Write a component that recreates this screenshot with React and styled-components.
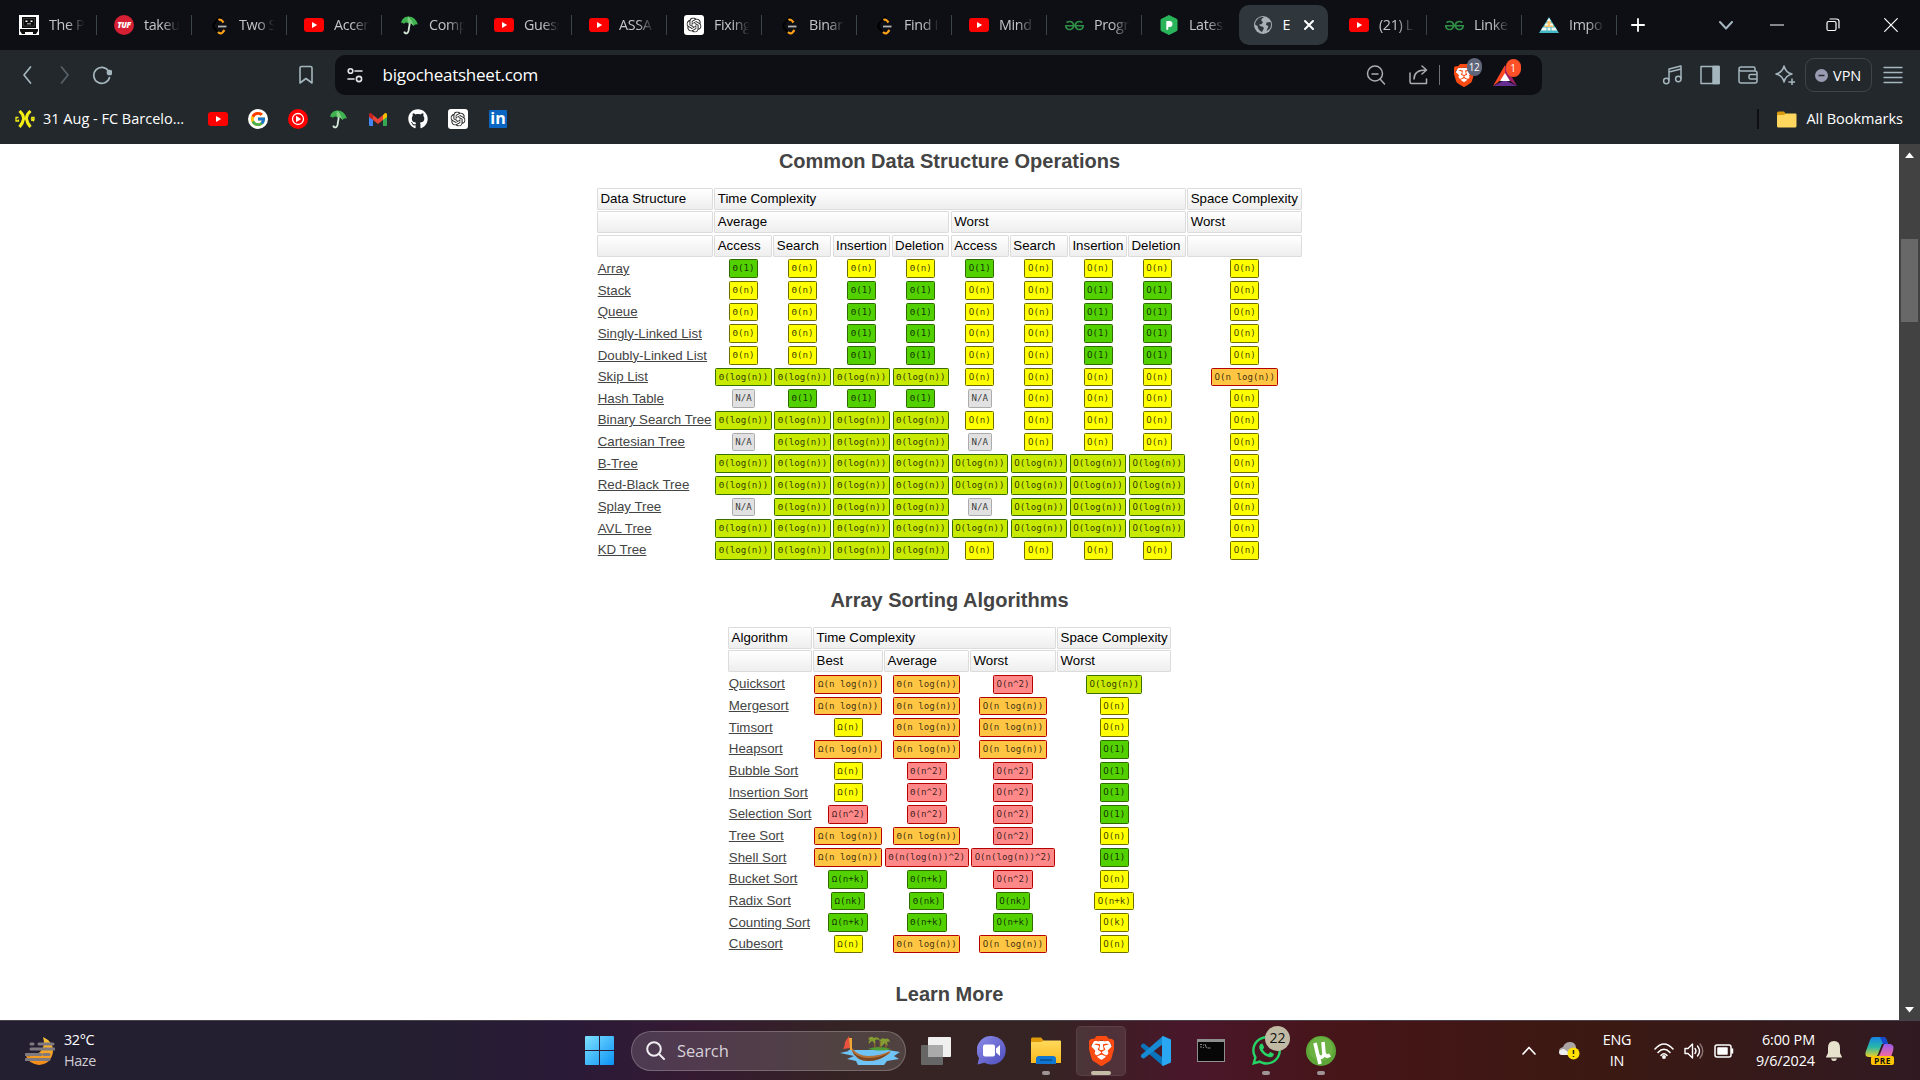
import React from "react";
import styled, { createGlobalStyle, css } from "styled-components";
import { SiBrave, SiOpenai, SiGeeksforgeeks } from "react-icons/si";
import { FaGithub, FaWhatsapp } from "react-icons/fa";
import { FcGoogle } from "react-icons/fc";

const Global = createGlobalStyle`
  * { box-sizing: border-box; }
  html, body { margin: 0; padding: 0; overflow: hidden; background: #fff; }
  svg { display: block; flex: none; }
`;

const ui = `"Open Sans", "Noto Sans", sans-serif`;

const Screen = styled.div`
  width: 1920px;
  height: 1080px;
  display: flex;
  flex-direction: column;
  overflow: hidden;
  font-family: ${ui};
`;

/* ---------- tab strip ---------- */
const TabStrip = styled.div`
  height: 50px;
  flex: none;
  display: flex;
  align-items: center;
  background: #0d0f14;
  padding-left: 4px;
`;
const Tab = styled.div`
  width: 95px;
  height: 40px;
  flex: none;
  display: flex;
  align-items: center;
  padding-left: 15px;
  border-radius: 10px;
  ${(p) =>
    p.$active &&
    css`
      width: 89px;
      margin-right: 6px;
      padding-left: 14px;
      background: #2f373c;
    `}
`;
const Favicon = styled.span`
  width: 20px;
  height: 20px;
  flex: none;
  display: flex;
  align-items: center;
  justify-content: center;
`;
const TabLabel = styled.span`
  width: ${(p) => (p.$active ? 7 : 37)}px;
  margin-left: ${(p) => (p.$active ? 9.5 : 10)}px;
  overflow: hidden;
  white-space: nowrap;
  font-size: 14.3px;
  line-height: 20px;
  letter-spacing: -0.35px;
  color: ${(p) => (p.$active ? "#fff" : "#c3c5c8")};
  mask-image: ${(p) => (p.$active ? "none" : "linear-gradient(90deg, #000 50%, transparent 96%)")};
`;
const TabDivider = styled.span`
  width: 1px;
  height: 20px;
  margin-left: 10px;
  background: #3b4549;
`;
const TabClose = styled.span`
  margin-left: 9px;
  display: flex;
`;
const WindowControls = styled.div`
  display: flex;
  align-items: center;
  margin-left: 12px;
`;
const Control = styled.span`
  display: flex;
  margin-left: ${(p) => p.$ml || 0}px;
`;

/* ---------- toolbar ---------- */
const Toolbar = styled.div`
  height: 50px;
  flex: none;
  display: flex;
  align-items: center;
  background: #22282c;
`;
const NavButtons = styled.div`
  width: 335px;
  display: flex;
  align-items: center;
  padding-left: 18px;
`;
const Slot = styled.span`
  display: flex;
  margin-left: ${(p) => p.$ml || 0}px;
`;
const AddressBar = styled.div`
  width: 1207px;
  height: 40px;
  border-radius: 10px;
  background: #0d0f14;
  display: flex;
  align-items: center;
  padding-left: 11px;
`;
const Url = styled.span`
  margin-left: 18.5px;
  width: 975px;
  font-size: 17px;
  letter-spacing: -0.25px;
  line-height: 24px;
  color: #fff;
`;
const AddressDivider = styled.span`
  width: 1px;
  height: 20px;
  margin-left: 11px;
  background: #6b7176;
`;
const ShieldWrap = styled.span`
  position: relative;
  display: flex;
  margin-left: ${(p) => p.$ml}px;
`;
const CountBadge = styled.span`
  position: absolute;
  left: 13px;
  top: -6px;
  width: 15px;
  height: 18px;
  border-radius: 8px;
  background: ${(p) => p.$bg};
  color: #fff;
  font-size: 10px;
  line-height: 18px;
  text-align: center;
  letter-spacing: -0.4px;
`;
const RightTools = styled.div`
  display: flex;
  align-items: center;
  padding-left: 120px;
`;
const Vpn = styled.span`
  width: 67px;
  height: 34px;
  margin-left: 10px;
  border: 1px solid #3c4649;
  border-radius: 9px;
  display: flex;
  align-items: center;
  padding-left: 9px;
  gap: 5px;
  font-size: 14.5px;
  color: #fff;
`;

/* ---------- bookmarks ---------- */
const Bookmarks = styled.div`
  height: 44px;
  flex: none;
  display: flex;
  align-items: center;
  background: #22282c;
  padding: 0 17px 6px 15px;
`;
const BookmarkText = styled.span`
  font-size: 14.5px;
  line-height: 20px;
  color: #fff;
  white-space: nowrap;
`;
const BookmarkName = styled.span`
  width: 173px;
  padding-left: 8px;
  display: flex;
`;
const BookmarkIcons = styled.div`
  display: flex;
  gap: 20px;
  flex: 1;
`;
const BookmarkDivider = styled.span`
  width: 2px;
  height: 20px;
  background: #0d0f14;
  margin-right: 18px;
`;

/* ---------- page ---------- */
const Viewport = styled.div`
  height: 876px;
  flex: none;
  display: flex;
  background: #fff;
`;
const Page = styled.main`
  width: 1899px;
  height: 876px;
  overflow: hidden;
  display: flex;
  flex-direction: column;
  align-items: center;
  font-family: "Liberation Sans", Arial, sans-serif;
`;
const Heading = styled.h2`
  margin: 0;
  padding-top: ${(p) => (p.$first ? 0 : 21.8)}px;
  padding-bottom: 10px;
  font-size: 20px;
  line-height: 34px;
  font-weight: 700;
  color: #444;
`;
const Table = styled.div`
  display: grid;
  column-gap: 1.4px;
  grid-template-columns: ${(p) => p.$cols};
  grid-auto-rows: 21.667px;
  grid-template-rows: repeat(${(p) => p.$headers}, 23.3px);
  font-size: 13.3px;
`;
const HeadCell = styled.div`
  height: 22px;
  grid-column: span ${(p) => p.$span || 1};
  border: 1px solid #dcdcdc;
  border-radius: 1px;
  background: linear-gradient(#fff, #eee);
  padding-left: 2.4px;
  line-height: 20.4px;
  color: #000;
  white-space: nowrap;
`;
const NameCell = styled.a`
  padding-left: 0.6px;
  line-height: 21.6px;
  color: #444;
  text-decoration: underline;
  white-space: nowrap;
`;
const ChipCell = styled.div`
  display: flex;
  align-items: center;
  justify-content: center;
  padding-left: 0.4px;
`;
const tones = {
  green: ["#53d000", "#2f6a00"],
  lime: ["#c8ea00", "#3a6f00"],
  yellow: ["#ffff00", "#6e6e00"],
  orange: ["#ffc543", "#b60000"],
  red: ["#ff8989", "#b60000"],
  gray: ["#e1e1e1", "#ababab"],
};
const Chip = styled.code`
  height: 18.6px;
  border: 1px solid ${(p) => tones[p.$tone][1]};
  border-radius: 1.5px;
  background: ${(p) => tones[p.$tone][0]};
  padding: 0 2.5px;
  font-family: "DejaVu Sans Mono", monospace;
  font-size: 9.15px;
  line-height: 16px;
  white-space: pre;
  color: rgba(0, 0, 0, 0.78);
`;
const Scrollbar = styled.div`
  width: 21px;
  height: 876px;
  background: #424242;
  display: flex;
  flex-direction: column;
  align-items: center;
  padding: 8px 0 7px;
`;
const Thumb = styled.div`
  width: 17px;
  height: 83px;
  margin-top: 81px;
  margin-bottom: auto;
  background: #686868;
`;

/* ---------- taskbar ---------- */
const Taskbar = styled.div`
  height: 60px;
  flex: none;
  display: flex;
  align-items: center;
  border-top: 1px solid #48414b;
  color: #fff;
  background: linear-gradient(90deg, #241f30 0, #241f30 400px, #2a1a38 570px, #351a32 690px, #352423 850px, #352423 1040px, #49172a 1190px, #461517 1350px, #3b1912 1600px, #301a22 1920px);
`;
const Weather = styled.div`
  width: 585px;
  display: flex;
  align-items: center;
  padding-left: 25px;
  gap: 9px;
`;
const Lines = styled.div`
  display: flex;
  flex-direction: column;
  align-items: ${(p) => p.$align || "flex-start"};
  width: ${(p) => (p.$w ? p.$w + "px" : "auto")};
  margin-left: ${(p) => p.$ml || 0}px;
  font-size: 14.4px;
  line-height: 20.5px;
  letter-spacing: ${(p) => p.$ls || 0}px;
  white-space: nowrap;
  color: #fff;
`;
const Dim = styled.span`
  color: #cfccd3;
`;
const SearchPill = styled.div`
  width: 275px;
  height: 40px;
  margin-left: 17px;
  border: 1px solid rgba(255, 255, 255, 0.22);
  border-radius: 20px;
  background: rgba(255, 255, 255, 0.14);
  display: flex;
  align-items: center;
  padding-left: 14px;
`;
const SearchText = styled.span`
  margin-left: 12px;
  width: 163px;
  font-size: 16.5px;
  letter-spacing: -0.1px;
  color: #d6d1d8;
`;
const AppTile = styled.div`
  width: 50px;
  height: 50px;
  margin-left: 5px;
  border-radius: 5px;
  display: flex;
  align-items: center;
  justify-content: center;
  position: relative;
  ${(p) =>
    p.$active &&
    css`
      background: rgba(255, 255, 255, 0.09);
      border: 1px solid rgba(255, 255, 255, 0.07);
    `}
`;
const Running = styled.span`
  position: absolute;
  bottom: ${(p) => (p.$wide ? 0 : 1)}px;
  left: 50%;
  width: ${(p) => (p.$wide ? 20 : 8)}px;
  height: 4px;
  margin-left: ${(p) => (p.$wide ? -10 : -4)}px;
  border-radius: 2px;
  background: ${(p) => (p.$wide ? "#c5bda5" : "#a09596")};
`;
const AppBadge = styled.span`
  position: absolute;
  right: 1px;
  top: 0;
  width: 25px;
  height: 25px;
  line-height: 24px;
  border-radius: 50%;
  background: #c0b9a4;
  color: #111;
  font-size: 14px;
  text-align: center;
`;
const Tray = styled.div`
  display: flex;
  align-items: center;
  margin-left: 176px;
`;

/* ---------- icons ---------- */
const YouTube = () => (
  <svg width="20" height="14" viewBox="0 0 20 14"><rect width="20" height="14" rx="3" fill="#f00" /><path d="M8 4l5.2 3L8 10z" fill="#fff" /></svg>
);
const LeetCode = () => (
  <svg width="20" height="20" viewBox="0 0 20 20" fill="none">
    <path d="M12 1L5 8.500Q3.500 11 5 13l4 4.500" stroke="#000" strokeWidth="2" />
    <path d="M9.500 5q2-1.500 5 2.500M9 17q2.500 2.500 4.500.5l2-2.500" stroke="#ffa116" strokeWidth="2.200" />
    <path d="M9 11.500h8.500" stroke="#b3b3b3" strokeWidth="1.800" />
  </svg>
);
const Umbrella = () => (
  <svg width="20" height="20" viewBox="0 0 20 20">
    <path d="M11 7l-1.500 9q-1.400 4-4 1.500l.3-1" fill="none" stroke="#d5eadb" strokeWidth="1.800" />
    <path d="M2 8Q3 2 9 1.500Q16 1 19 9.500Q16 8.500 14.500 11Q12 7 9.500 8.500Q6.500 6.500 5 9Q3.500 7 2 8z" fill="#3fb34f" />
    <path d="M9.500 8.500Q8 4 9 1.500Q13 5 14.500 11Q12 7 9.500 8.500z" fill="#81cf82" />
  </svg>
);
const Train = () => (
  <svg width="20" height="20" viewBox="0 0 20 20"><rect width="20" height="20" fill="#fff" /><path d="M3 2h14v11H3zM1 14h18v2l-2 3h-3v-2H6v2H3l-2-3z" fill="#0c0c0c" /><path d="M4.500 3.500h11v7.500h-11z" fill="#0c0c0c" stroke="#555" strokeWidth=".6" /><path d="M6.500 5.500h2v1.500h-2zM11.500 5.500h2v1.500h-2zM8 8.500h4v.8H8z" fill="#fff" /></svg>
);
const TufLabel = styled.span`
  width: 20px;
  height: 20px;
  border-radius: 50%;
  background: #d51f33;
  color: #fff;
  font: italic 800 8px/20px "Open Sans", sans-serif;
  text-align: center;
  letter-spacing: -0.3px;
`;
const OpenAi = () => (
  <svg width="20" height="20" viewBox="0 0 20 20"><rect width="20" height="20" rx="3" fill="#fff" /><SiOpenai x="2.500" y="2.500" size={15} color="#222" /></svg>
);
const Gfg = () => <SiGeeksforgeeks size={19} color="#2f8d46" />;
const Hexagon = () => (
  <svg width="20" height="20" viewBox="0 0 20 20"><path d="M10 .5l8 4v11l-8 4-8-4v-11z" fill="#2bb55b" stroke="#2bb55b" strokeLinejoin="round" /><path d="M8.300 14V7h2.200a2 2 0 010 4H8.300" fill="#fff" stroke="#fff" strokeWidth="2" strokeLinecap="round" /></svg>
);
const Globe = () => (
  <svg width="20" height="20" viewBox="0 0 20 20"><circle cx="10" cy="10" r="9" fill="#a9b0b6" /><path d="M11 2q-5 3-1 5-1 3-4 2.500 1 2.500 3.500 2l1.500 1.500-2 4Q5 15 4.500 11L2 9.500Q3 3 9 2M17.500 7l-4 .5-.5 2.500 2.500 1-2 5q5-2 4.500-7z" fill="#2f373c" /></svg>
);
const Pyramid = () => (
  <svg width="20" height="16" viewBox="0 0 20 16"><path d="M0 16L10 0l10 16z" fill="#43b9c3" /><path d="M5 10L10 2l5 8z" fill="#ffc36d" /><path d="M10 1l2 3H8zM6.500 6.500h2.500v2H5.500zM11 6.500h2.500l1 2H11zM3.500 10.500h4v3H2zM8.500 10.500h3v3h-3zM12.500 10.500h4l1.500 3h-5.500z" fill="#f2f7f5" /></svg>
);
const BraveLion = ({ w, h }) => (
  <svg width={w} height={h} viewBox="2.500 0 19 24" preserveAspectRatio="none"><path d="M6 4h12l2 5-3 9-5 4-5-4-3-9z" fill="#fff" /><SiBrave size={24} color="#fb4b12" /></svg>
);
const Stroke = ({ w = 20, h = 20, vb = "0 0 20 20", c = "#a5b6be", sw = 1.5, d, children }) => (
  <svg width={w} height={h} viewBox={vb} fill="none" stroke={c} strokeWidth={sw} strokeLinecap="round" strokeLinejoin="round"><path d={d} />{children}</svg>
);
const BatTriangle = () => (
  <svg width="24" height="21" viewBox="0 0 24 21"><path d="M12 0L0 21l12-9z" fill="#ff4724" /><path d="M12 0l12 21-12-9z" fill="#9e1f63" /><path d="M0 21l12-6 12 6z" fill="#662d91" /><path d="M12 8l5 8H7z" fill="#fff" /></svg>
);
const Gmail = () => (
  <svg width="20" height="15" viewBox="0 0 20 15"><path d="M1 2v11q0 1 1 1h3V6" fill="#4285f4" /><path d="M15 6v8h3q1 0 1-1V2" fill="#34a853" /><path d="M15 3l2-2q2-.5 2 1.500V5l-4 3z" fill="#fbbc04" /><path d="M5 3l5 4 5-4v5l-5 4-5-4z" fill="#ea4335" /><path d="M1 5V2.500Q1 .5 3 1l2 2v5z" fill="#c5221f" /></svg>
);
const YtMusic = () => (
  <svg width="20" height="20" viewBox="0 0 20 20"><circle cx="10" cy="10" r="10" fill="#f00" /><circle cx="10" cy="10" r="5.500" fill="none" stroke="#fff" strokeWidth="1.300" /><path d="M8 6.800L13.200 10 8 13.200z" fill="#fff" /></svg>
);
const GoogleDisc = () => (
  <svg width="20" height="20" viewBox="0 0 20 20"><circle cx="10" cy="10" r="10" fill="#fff" /><FcGoogle x="1.500" y="1.500" size={17} /></svg>
);
const Gxr = () => (
  <svg width="20" height="18" viewBox="0 0 20 18" fill="none" stroke="#f5ee14"><path d="M4.500 1Q9 5 8.500 9T4.500 17M15.500 1Q11 5 11.500 9t4 8" strokeWidth="3" /><path d="M3.500 7.500H1v3.500h2.500V9.500M16.800 11V7.500H19v2h-2l2 1.700" strokeWidth="1.300" /></svg>
);
const LinkedBox = styled.span`
  width: 18px;
  height: 18px;
  border-radius: 1px;
  background: #0a66c2;
  color: #fff;
  font: 700 16px/16px "Open Sans", sans-serif;
  text-align: center;
`;
const Folder = () => (
  <svg width="20" height="17" viewBox="0 0 20 17"><path d="M0 2q0-1.500 1.500-1.500H7L9 3h9v5H0z" fill="#d99a10" /><path d="M0 5q0-1 1-1h6l2-1.500h9.500q1 0 1 1V15q0 1.500-1.500 1.500H1.500Q0 16.500 0 15z" fill="#ffd75e" /></svg>
);
const Haze = () => (
  <svg width="30" height="30" viewBox="0 0 30 30"><defs><linearGradient id="moon" x2="0" y2="1"><stop stopColor="#f8c63c" /><stop offset="1" stopColor="#f28a18" /></linearGradient></defs><path d="M18 1Q29 6 28 16 26 28 14 29 4 28 1 20 9 21 15 16 21 10 18 1z" fill="url(#moon)" /><path d="M6 8h2M14 8h14M6 13h23M1 18.500h15M19 18.500h5M1 23.500h23" stroke="#7f7a80" strokeWidth="3" strokeLinecap="round" /></svg>
);
const Windows = () => (
  <svg width="29" height="29" viewBox="0 0 29 29"><defs><linearGradient id="win" x2="1" y2="1"><stop stopColor="#7fe0ff" /><stop offset="1" stopColor="#0a93f5" /></linearGradient></defs><path d="M1 0h13v14H0V1q0-1 1-1zM15 0h13q1 0 1 1v13H15zM0 15h14v14H1q-1 0-1-1zM15 15h14v13q0 1-1 1H15z" fill="url(#win)" /></svg>
);
const Boat = () => (
  <svg width="60" height="32" viewBox="0 0 60 32">
    <path d="M8 15h40l12 2-6 4 5 3-12 2-3 4H18l-2-4-9-2 7-3-14-3 9-2z" fill="#6fc3f5" />
    <path d="M28 14q10-4 23 0-10 3-23 0z" fill="#4e9c33" />
    <path d="M35 13q0-5-2-9M40 13q1-4 0-7M46 13q-1-4 1-8" stroke="#8a6a2b" strokeWidth="1.300" fill="none" />
    <path d="M28 4q3-4 6-1 4-2 6 2-4-1-5 0 1 2 0 4-2-3-3-3-2 1-3 3-1-3 1-4zM39 6q3-4 6-2 4-2 5 3-2-1-3 0l1 4-3-3-4 4q-1-4 0-6z" fill="#859c32" />
    <path d="M9 1l1 12-7 1q2-3 2-7z" fill="#e9503d" />
    <path d="M9 3h3v10q6 8 16 8 12 0 22-5 1 2-3 4-8 6-20 6-12-1-16-12z" fill="#b5713a" />
    <path d="M12 16q6 7 16 7 12 0 22-6-9 9-22 9-11 0-16-10z" fill="#7a4822" />
    <path d="M9 3h3v12h-2z" fill="#f0a534" />
  </svg>
);
const TaskView = () => (
  <svg width="30" height="28" viewBox="0 0 30 28"><rect x="7" width="23" height="20" rx="1" fill="#f0f0f0" /><rect y="8" width="22" height="20" rx="1" fill="#666" /><path d="M7 8h15v12H7z" fill="#aaa" /></svg>
);
const Chat = () => (
  <svg width="29" height="29" viewBox="0 0 29 29"><defs><linearGradient id="chat" x2="1" y2="1"><stop stopColor="#8b8ce8" /><stop offset="1" stopColor="#4e4dbd" /></linearGradient></defs><path d="M14.500 0a14.300 14.300 0 11-7 26.800L.5 28.500 2 22A14.300 14.300 0 0114.500 0z" fill="url(#chat)" /><rect x="6" y="8.500" width="12" height="12" rx="2" fill="#fff" /><path d="M19 12.500l4-3.500v11l-4-3.500z" fill="#fff" /></svg>
);
const Explorer = () => (
  <svg width="30" height="27" viewBox="0 0 30 27"><defs><linearGradient id="fold" x2="0" y2="1"><stop stopColor="#ffd95c" /><stop offset="1" stopColor="#fbb91c" /></linearGradient></defs><path d="M0 2q0-1.500 1.500-1.500H10L13 4v3H0z" fill="#e09b0b" /><path d="M0 5h10l3-1.500h16q1 0 1 1V26H0z" fill="url(#fold)" /><path d="M5 27v-5q0-3 3-3h14q3 0 3 3v5z" fill="#1076d0" /><path d="M9 23h12" stroke="#06478c" strokeWidth="1.300" /></svg>
);
const Code = () => (
  <svg width="30" height="30" viewBox="0 0 30 30"><path d="M0 9l2-1.500h1L22 22v8L0 11z" fill="#0b73b9" /><path d="M0 21l2 1.500h1L22 8V0L0 19z" fill="#168bd4" /><path d="M22 0l8 3.500v23L22 30l-1-.7V.7z" fill="#2aa7f3" /></svg>
);
const Terminal = () => (
  <svg width="28" height="23" viewBox="0 0 28 23"><rect width="28" height="23" fill="#8f8f8f" /><path d="M1 3h26v19H1z" fill="#070707" /><path d="M3 5.500h2M3 8h2M6.500 5.500v1M6.500 8v1M8 5l1.500 4M10.500 9h3" stroke="#aaa" strokeWidth=".8" /></svg>
);
const Torrent = () => (
  <svg width="30" height="30" viewBox="0 0 30 30"><circle cx="15" cy="15" r="15" fill="#5da637" /><circle cx="15" cy="13" r="12" fill="#7abd4d" opacity=".5" /><path d="M9 7l3 13q5 3 6-2L17 6M18 17q2 5 6 2M12 19l2 9" stroke="#fff" strokeWidth="3.600" fill="none" /></svg>
);
const Cloud = () => (
  <svg width="21" height="18" viewBox="0 0 21 18"><path d="M4 13q-4 0-4-4 0-3 4-4Q6 0 11 0t6 5v8z" fill="#aaa4a5" /><path d="M3 13q-3 0-3-3 1-3 5-3l8 6z" fill="#eee" /><circle cx="14.500" cy="11.500" r="6" fill="#ffe000" /><path d="M14.500 8v4M14.500 14v1" stroke="#222" strokeWidth="1.500" /></svg>
);
const Copilot = () => (
  <svg width="30" height="28" viewBox="0 0 30 28"><defs><linearGradient id="cpa" x2="0" y2="1"><stop stopColor="#1683e6" /><stop offset=".5" stopColor="#28b7a8" /><stop offset="1" stopColor="#f1cf24" /></linearGradient><linearGradient id="cpb" x2="0" y2="1"><stop stopColor="#985bea" /><stop offset="1" stopColor="#f96b9a" /></linearGradient></defs><path d="M8 0h10q3 0 4 4l1 3h-6l-4 10q-1 3-4 3H4q-5 0-3-6L5 3q1-3 3-3z" fill="url(#cpa)" /><path d="M15 0h3q3 0 4 4l1 3h-5z" fill="#1748cf" /><path d="M19 7h6q5 1 3 7l-2 6H12q2-1 3-3z" fill="url(#cpb)" /></svg>
);
const CopilotWrap = styled.span`
  position: relative;
  display: flex;
  margin-left: 23px;
`;
const PreTag = styled.span`
  position: absolute;
  left: 6px;
  top: 19px;
  width: 23px;
  height: 9px;
  border-radius: 2px;
  background: #ffc400;
  color: #111;
  font-size: 8.5px;
  font-weight: 700;
  line-height: 9px;
  text-align: center;
  letter-spacing: 0.4px;
`;

/* ---------- data ---------- */
const tabs = [
  [Train, "The P"], ["tuf", "takeu"], [LeetCode, "Two S"], [YouTube, "Accen"], [Umbrella, "Comp"],
  [YouTube, "Guess"], [YouTube, "ASSA"], [OpenAi, "Fixing"], [LeetCode, "Binar"], [LeetCode, "Find I"],
  [YouTube, "Mind"], [Gfg, "Progr"], [Hexagon, "Lates"], [Globe, "E"], [YouTube, "(21) L"],
  [Gfg, "Linke"], [Pyramid, "Impo"],
];
const ACTIVE = 13;

const expr = {
  1: ["(1)", "green"], n: ["(n)", "yellow"], l: ["(log(n))", "lime"], L: ["(n log(n))", "orange"],
  2: ["(n^2)", "red"], s: ["(n(log(n))^2)", "red"], p: ["(n+k)", "green"], P: ["(n+k)", "yellow"],
  k: ["(nk)", "green"], K: ["(k)", "yellow"],
};
const structures = [
  ["Array", "1nnn1nnnn"], ["Stack", "nn11nn11n"], ["Queue", "nn11nn11n"], ["Singly-Linked List", "nn11nn11n"],
  ["Doubly-Linked List", "nn11nn11n"], ["Skip List", "llllnnnnL"], ["Hash Table", "-111-nnnn"],
  ["Binary Search Tree", "llllnnnnn"], ["Cartesian Tree", "-lll-nnnn"], ["B-Tree", "lllllllln"],
  ["Red-Black Tree", "lllllllln"], ["Splay Tree", "-lll-llln"], ["AVL Tree", "lllllllln"], ["KD Tree", "llllnnnnn"],
];
const sorts = [
  ["Quicksort", "LL2l"], ["Mergesort", "LLLn"], ["Timsort", "nLLn"], ["Heapsort", "LLL1"], ["Bubble Sort", "n221"],
  ["Insertion Sort", "n221"], ["Selection Sort", "2221"], ["Tree Sort", "LL2n"], ["Shell Sort", "Lss1"],
  ["Bucket Sort", "pp2n"], ["Radix Sort", "kkkP"], ["Counting Sort", "pppK"], ["Cubesort", "nLLn"],
];

function Rows({ data, prefixes }) {
  return data.map(([name, codes]) => (
    <React.Fragment key={name}>
      <NameCell>{name}</NameCell>
      {codes.split("").map((c, i) => (
        <ChipCell key={i}>
          {c === "-" ? <Chip $tone="gray">N/A</Chip> : <Chip $tone={expr[c][1]}>{prefixes[i] + expr[c][0]}</Chip>}
        </ChipCell>
      ))}
    </React.Fragment>
  ));
}

export default function App() {
  return (
    <Screen>
      <Global />
      <TabStrip>
        {tabs.map(([Icon, label], i) => (
          <Tab key={i} $active={i === ACTIVE}>
            <Favicon>{Icon === "tuf" ? <TufLabel>TUF</TufLabel> : <Icon />}</Favicon>
            <TabLabel $active={i === ACTIVE}>{label}</TabLabel>
            {i === ACTIVE && (
              <TabClose><Stroke w={20} h={20} c="#fff" sw={2} d="M6 6l8 8M14 6l-8 8" /></TabClose>
            )}
            {i !== ACTIVE && i !== ACTIVE - 1 && <TabDivider />}
          </Tab>
        ))}
        <WindowControls>
          <Control><Stroke w={14} h={14} vb="0 0 14 14" c="#fff" sw={1.8} d="M7 .9v12.200M.9 7h12.200" /></Control>
          <Control $ml={74}><Stroke w={14} h={9} vb="0 0 14 9" c="#a5b6be" sw={2} d="M1 1l6 6.500L13 1" /></Control>
          <Control $ml={37}><Stroke w={14} h={2} vb="0 0 14 2" c="#fff" sw={1.2} d="M.5 1h13" /></Control>
          <Control $ml={42}><Stroke w={14} h={14} vb="0 0 14 14" c="#fff" sw={1.2} d="M2.500 3.500h6q1.500 0 1.500 1.500v6q0 1.500-1.500 1.500h-6Q1 12.500 1 11V5q0-1.500 1.500-1.500zM4 1h6.500Q13 1 13 3.500V10" /></Control>
          <Control $ml={44}><Stroke w={14} h={14} vb="0 0 14 14" c="#fff" sw={1.2} d="M.7.7l12.600 12.600M13.300.7L.7 13.300" /></Control>
        </WindowControls>
      </TabStrip>

      <Toolbar>
        <NavButtons>
          <Stroke d="M12.500 2L6 10l6.500 8" sw={1.7} />
          <Slot $ml={17}><Stroke c="#596268" d="M6.500 2L13 10l-6.500 8" sw={1.7} /></Slot>
          <Slot $ml={17}><Stroke d="M17.500 12.500a8 8 0 11-1-6.500" sw={1.7}><circle cx="17.500" cy="7.500" r="2" fill="#a5b6be" /></Stroke></Slot>
          <Slot $ml={184}><Stroke sw={1.6} d="M4 3q0-1.500 1.500-1.500h9Q16 1.500 16 3v15l-6-4.500L4 18z" /></Slot>
        </NavButtons>
        <AddressBar>
          <Stroke w={18} h={18} vb="0 0 18 18" c="#e3e6e8" sw={1.6} d="M9 5h7M2 13h6"><circle cx="4.500" cy="5" r="2.300" /><circle cx="13" cy="13" r="2.600" /></Stroke>
          <Url>bigocheatsheet.com</Url>
          <Slot $ml={8}><Stroke c="#a9adb1" d="M14 14l4.500 5M6 9h6"><circle cx="9" cy="8.500" r="7.500" /></Stroke></Slot>
          <Slot $ml={22}><Stroke c="#a9adb1" d="M2 8v9q0 1.500 1.500 1.500h15V14M6 14q0-9 12-9M14 1l4.500 4L14 9" /></Slot>
          <AddressDivider />
          <ShieldWrap $ml={14}><BraveLion w={20} h={23} /><CountBadge $bg="#60667a">12</CountBadge></ShieldWrap>
          <ShieldWrap $ml={19}><BatTriangle /><CountBadge $bg="#ff5027">1</CountBadge></ShieldWrap>
        </AddressBar>
        <RightTools>
          <Stroke d="M7 15V4l12-3v12M7 7l12-3"><circle cx="4.300" cy="16" r="2.700" /><circle cx="16.300" cy="14" r="2.700" /></Stroke>
          <Slot $ml={18}><Stroke d="M1 1.500h18v17H1z"><path d="M13 1.500h6v17h-6z" fill="#a5b6be" /></Stroke></Slot>
          <Slot $ml={18}><Stroke d="M17 6V3.500Q17 2 15.500 2H3Q1 2 1 4v12q0 2 2 2h14q2 0 2-2V8q0-2-2-2H3Q1 6 1 4M19 9.500h-6.500q-1.500 0-1.500 1.500v1q0 2 1.500 2H19" /></Slot>
          <Slot $ml={17}><Stroke d="M9 1q1.500 6.500 8 8-6.500 1.500-8 8-1.500-6.500-8-8 6.500-1.500 8-8zM17 14v6M14 17h6" /></Slot>
          <Vpn><svg width="13" height="13" viewBox="0 0 13 13"><circle cx="6.500" cy="6.500" r="6.500" fill="#9a9bb2" /><path d="M3.500 6.500h6" stroke="#22282c" strokeWidth="1.500" /></svg>VPN</Vpn>
          <Slot $ml={11}><Stroke d="M1 2.500h18M1 7.500h18M1 12.500h18M1 17.500h18" sw={1.3} /></Slot>
        </RightTools>
      </Toolbar>

      <Bookmarks>
        <Gxr />
        <BookmarkName><BookmarkText>31 Aug - FC Barcelo...</BookmarkText></BookmarkName>
        <BookmarkIcons>
          <Favicon><YouTube /></Favicon>
          <Favicon><GoogleDisc /></Favicon>
          <Favicon><YtMusic /></Favicon>
          <Favicon><Umbrella /></Favicon>
          <Favicon><Gmail /></Favicon>
          <Favicon><FaGithub size={20} color="#fff" /></Favicon>
          <Favicon><OpenAi /></Favicon>
          <Favicon><LinkedBox>in</LinkedBox></Favicon>
        </BookmarkIcons>
        <BookmarkDivider />
        <Folder />
        <Slot $ml={9}><BookmarkText>All Bookmarks</BookmarkText></Slot>
      </Bookmarks>

      <Viewport>
        <Page>
          <Heading $first>Common Data Structure Operations</Heading>
          <Table $headers={3} $cols="115.9px repeat(8, 57.73px) 114.7px">
            <HeadCell>Data Structure</HeadCell><HeadCell $span={8}>Time Complexity</HeadCell><HeadCell>Space Complexity</HeadCell>
            <HeadCell /><HeadCell $span={4}>Average</HeadCell><HeadCell $span={4}>Worst</HeadCell><HeadCell>Worst</HeadCell>
            <HeadCell />
            {["Access", "Search", "Insertion", "Deletion", "Access", "Search", "Insertion", "Deletion"].map((t, i) => (
              <HeadCell key={i}>{t}</HeadCell>
            ))}
            <HeadCell />
            <Rows data={structures} prefixes="ΘΘΘΘOOOOO" />
          </Table>
          <Heading>Array Sorting Algorithms</Heading>
          <Table $headers={2} $cols="83.6px 69.6px 84.5px 85.7px 113.7px">
            <HeadCell>Algorithm</HeadCell><HeadCell $span={3}>Time Complexity</HeadCell><HeadCell>Space Complexity</HeadCell>
            <HeadCell /><HeadCell>Best</HeadCell><HeadCell>Average</HeadCell><HeadCell>Worst</HeadCell><HeadCell>Worst</HeadCell>
            <Rows data={sorts} prefixes="ΩΘOO" />
          </Table>
          <Heading>Learn More</Heading>
        </Page>
        <Scrollbar>
          <svg width="9" height="6" viewBox="0 0 9 6"><path d="M0 6l4.500-5.500L9 6z" fill="#fff" /></svg>
          <Thumb />
          <svg width="9" height="6" viewBox="0 0 9 6"><path d="M0 0l4.500 5.500L9 0z" fill="#fff" /></svg>
        </Scrollbar>
      </Viewport>

      <Taskbar>
        <Weather>
          <Haze />
          <Lines $ls={-0.4}><span>32°C</span><Dim>Haze</Dim></Lines>
        </Weather>
        <Windows />
        <SearchPill>
          <Stroke w={19} h={19} vb="0 0 19 19" c="#f0edf2" sw={2} d="M13 13l5 5"><circle cx="8" cy="8" r="6.800" /></Stroke>
          <SearchText>Search</SearchText>
          <Boat />
        </SearchPill>
        <AppTile><TaskView /></AppTile>
        <AppTile><Chat /></AppTile>
        <AppTile><Explorer /><Running /></AppTile>
        <AppTile $active><BraveLion w={25} h={30} /><Running $wide /></AppTile>
        <AppTile><Code /></AppTile>
        <AppTile><Terminal /></AppTile>
        <AppTile><FaWhatsapp size={33} color="#25d366" /><AppBadge>22</AppBadge><Running /></AppTile>
        <AppTile><Torrent /><Running /></AppTile>
        <Tray>
          <Stroke w={14} h={9} vb="0 0 14 9" c="#fff" sw={1.7} d="M1 8l6-6.500L13 8" />
          <Slot $ml={23}><Cloud /></Slot>
          <Lines $align="center" $w={40} $ml={17} $ls={-0.3}><span>ENG</span><span>IN</span></Lines>
          <Slot $ml={17}><Stroke w={20} h={16} vb="0 0 20 16" c="#fff" sw={1.5} d="M1 6Q10-4 19 6M4 9.500q6-6.500 12 0M7 12.500q3-3.500 6 0"><circle cx="10" cy="14" r="1.200" fill="#fff" /></Stroke></Slot>
          <Slot $ml={10}><Stroke w={20} h={16} vb="0 0 20 16" c="#fff" sw={1.4} d="M1 5.500h3L8.500 1v14L4 10.500H1zM11 5.500q2 2.500 0 5M13.500 3q4 5 0 10"><path d="M16 1q5.500 7 0 14" stroke="#8a7474" /></Stroke></Slot>
          <Slot $ml={10}><Stroke w={20} h={14} vb="0 0 20 14" c="#fff" sw={1.5} d="M3 1h12q2 0 2 2v8q0 2-2 2H3q-2 0-2-2V3q0-2 2-2zM18.500 5v4"><path d="M4 4h9v6H4z" fill="#fff" /></Stroke></Slot>
          <Lines $align="flex-end" $w={70} $ml={11} $ls={-0.1}><span>6:00 PM</span><span>9/6/2024</span></Lines>
          <Slot $ml={11}><svg width="16" height="20" viewBox="0 0 16 20"><path d="M2 7q0-7 6-7t6 7v5l2 4v.500H0V16l2-4zM5 17.500h6q-.5 2.500-3 2.500t-3-2.500z" fill="#e6e2cb" /></svg></Slot>
          <CopilotWrap><Copilot /><PreTag>PRE</PreTag></CopilotWrap>
        </Tray>
      </Taskbar>
    </Screen>
  );
}
